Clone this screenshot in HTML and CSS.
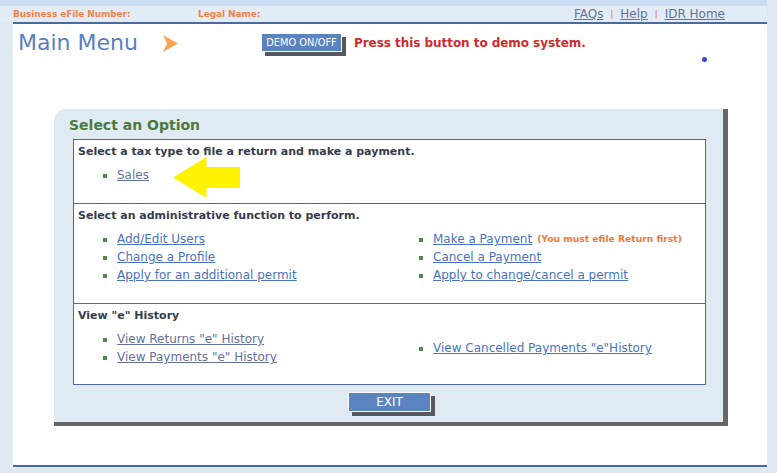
FILE: index.html
```html
<!DOCTYPE html>
<html lang="en">
<head>
    <meta charset="utf-8">
    <title>Main Menu</title>
    <link rel="stylesheet" href="styles.css">
</head>
<body>
    <div class="wrap">
        <div class="topstrip"></div>
        <div class="infobar">
            <span class="lbl lbl-num">Business eFile Number:</span>
            <span class="lbl">Legal Name:</span>
            <div class="toplinks">
                <a href="#" class="visited">FAQs</a><span class="sep">|</span><a href="#" class="visited">Help</a><span class="sep">|</span><a href="#" class="visited">IDR Home</a>
            </div>
        </div>
        <div class="frame">
            <div class="head">
                <h1 class="title">Main Menu</h1>
                <svg class="arrow" width="15" height="17" viewBox="0 0 15 17"><polygon points="0,0 15,8.5 0,17 4,8.5" fill="#f6a557"/></svg>
                <button class="btn demo">DEMO ON/OFF</button>
                <span class="press">Press this button to demo system.</span>
            </div>
            <span class="dot"></span>
            <div class="panel">
                <h2 class="panel-title">Select an Option</h2>
                <div class="options">
                    <div class="opt-row r1">
                        <div class="opt-head">Select a tax type to file a return and make a payment.</div>
                        <div class="cols">
                            <ul class="col">
                                <li><a href="#" class="visited">Sales</a></li>
                            </ul>
                        </div>
                        <svg class="pointer" width="67" height="41" viewBox="0 0 67 41"><polygon points="0,20.5 33.5,0 33.5,10 67,10 67,31 33.5,31 33.5,41" fill="#fff200"/></svg>
                    </div>
                    <div class="opt-row r2">
                        <div class="opt-head">Select an administrative function to perform.</div>
                        <div class="cols">
                            <ul class="col">
                                <li><a href="#">Add/Edit Users</a></li>
                                <li><a href="#">Change a Profile</a></li>
                                <li><a href="#">Apply for an additional permit</a></li>
                            </ul>
                            <ul class="col">
                                <li><a href="#">Make a Payment</a><span class="note">(You must efile Return first)</span></li>
                                <li><a href="#">Cancel a Payment</a></li>
                                <li><a href="#">Apply to change/cancel a permit</a></li>
                            </ul>
                        </div>
                    </div>
                    <div class="opt-row r3">
                        <div class="opt-head">View "e" History</div>
                        <div class="cols">
                            <ul class="col">
                                <li><a href="#" class="visited">View Returns "e" History</a></li>
                                <li><a href="#" class="visited">View Payments "e" History</a></li>
                            </ul>
                            <ul class="col">
                                <li><a href="#">View Cancelled Payments "e"History</a></li>
                            </ul>
                        </div>
                    </div>
                </div>
                <div class="exit-wrap">
                    <button class="btn exit">EXIT</button>
                </div>
            </div>
        </div>
    </div>
</body>
</html>
```

FILE: styles.css
```css
body{
    margin: 0;
    background-color: #dfe9f3;
    font-family: "DejaVu Sans", Verdana, sans-serif;
}
.wrap{
    width: 767px;
}
.topstrip{
    height: 6px;
    background-color: #c9ddf3;
}
.infobar{
    display: flex;
    align-items: center;
    height: 16px;
    padding: 0 42px 0 13px;
    background-color: #e2ecf7;
}
.lbl{
    font-size: 9px;
    font-weight: bold;
    color: #f0834a;
    line-height: 11px;
    letter-spacing: -0.1px;
}
.lbl-num{
    width: 185px;
}
.toplinks{
    display: flex;
    align-items: center;
    margin-left: auto;
    font-size: 12px;
    line-height: 14px;
}
.toplinks a{
    color: #5b6b95;
}
.sep{
    margin: 2px 7px 0;
    font-size: 8px;
    font-weight: bold;
    color: #f08a4b;
}
.frame{
    position: relative;
    height: 441px;
    margin-left: 13px;
    background-color: #fff;
    border-top: 2px solid #4a6a9b;
    border-bottom: 2px solid #4a6a9b;
}
.head{
    display: flex;
    align-items: center;
    height: 38px;
    padding-left: 5px;
}
.title{
    width: 145px;
    margin: 0;
    font-size: 22px;
    font-weight: normal;
    line-height: 26px;
    color: #5a7fc0;
}
.arrow{
    flex: none;
    margin-right: 83px;
}
.btn{
    padding: 0;
    border: 1px solid #fff;
    background-color: #5b83bf;
    color: #fff;
    font-family: "DejaVu Sans", Verdana, sans-serif;
    box-shadow: 4px 4px 0 #55585f;
}
.demo{
    width: 81px;
    height: 19px;
    margin: 0 12px 2px 0;
    font-size: 9.8px;
}
.press{
    font-size: 12px;
    font-weight: bold;
    color: #cf2a2c;
    letter-spacing: -0.05px;
}
.dot{
    position: absolute;
    left: 689px;
    top: 33px;
    width: 5px;
    height: 5px;
    border-radius: 50%;
    background-color: #3a48c8;
}
.panel{
    box-sizing: border-box;
    width: 674px;
    height: 317px;
    margin: 47px 0 0 41px;
    padding: 8px 0 0 15px;
    background-color: #e0eaf3;
    border-right: 5px solid #666;
    border-bottom: 4px solid #666;
    border-top-left-radius: 12px;
}
.panel-title{
    margin: 0;
    font-size: 14px;
    line-height: 17px;
    color: #4b7a3c;
}
.options{
    box-sizing: border-box;
    width: 633px;
    margin: 5px 0 0 4px;
    background-color: #fff;
    border: 1px solid #4a6898;
}
.opt-row{
    position: relative;
    box-sizing: border-box;
    padding: 5px 0 0 4px;
}
.r1{
    height: 63px;
}
.r2{
    height: 100px;
    border-top: 1px solid #4e7c47;
}
.r3{
    height: 81px;
    border-top: 1px solid #4e7c47;
}
.opt-head{
    font-size: 11px;
    font-weight: bold;
    line-height: 14px;
    color: #353b4f;
}
.cols{
    display: flex;
    align-items: center;
    margin-top: 7px;
    padding-left: 25px;
}
.col{
    flex: none;
    width: 316px;
    margin: 0;
    padding: 0;
    list-style: none;
}
.col + .col{
    flex: 1;
    width: auto;
}
.col li{
    display: flex;
    font-size: 12px;
    line-height: 18px;
    white-space: nowrap;
}
.col li::before{
    content: "";
    flex: none;
    width: 4px;
    height: 4px;
    margin: 8px 10px 0 0;
    background-color: #4e8a4a;
}
.col a{
    color: #4a72bf;
}
a.visited{
    color: #66709c;
}
.note{
    margin-left: 5px;
    font-size: 9.2px;
    font-weight: bold;
    color: #f07a35;
}
.pointer{
    position: absolute;
    left: 99px;
    top: 17px;
}
.exit-wrap{
    display: flex;
    justify-content: center;
    width: 633px;
    margin: 7px 0 0 4px;
}
.exit{
    width: 83px;
    height: 20px;
    font-size: 12px;
}
```
